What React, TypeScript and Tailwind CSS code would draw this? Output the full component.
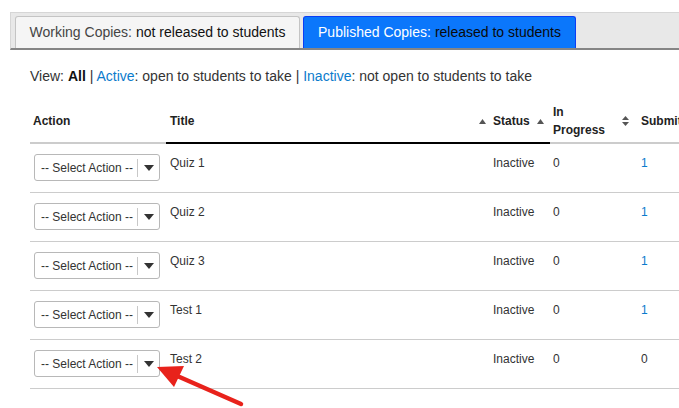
import React from "react";

const rows = [
  { title: "Quiz 1", status: "Inactive", prog: "0", sub: "1", link: true },
  { title: "Quiz 2", status: "Inactive", prog: "0", sub: "1", link: true },
  { title: "Quiz 3", status: "Inactive", prog: "0", sub: "1", link: true },
  { title: "Test 1", status: "Inactive", prog: "0", sub: "1", link: true },
  { title: "Test 2", status: "Inactive", prog: "0", sub: "0", link: false },
];

function SelectBox() {
  return (
    <div className="flex h-[27px] w-[126px] items-center rounded-[3px] border border-[#b8b8b8] bg-white">
      <span className="pl-[6px] text-[12px] text-[#333] whitespace-nowrap">-- Select Action --</span>
      <span className="ml-[4px] h-[18px] w-px bg-[#c8c8c8]" />
      <svg width="10" height="6" viewBox="0 0 10 6" className="ml-[6px]">
        <path d="M0 0 L10 0 L5 6 Z" fill="#333" />
      </svg>
    </div>
  );
}

const Up = () => (
  <svg width="7" height="5" viewBox="0 0 7 5"><path d="M0 5 L7 5 L3.5 0 Z" fill="#555" /></svg>
);
const Both = () => (
  <svg width="7" height="10" viewBox="0 0 7 10">
    <path d="M0 4 L7 4 L3.5 0 Z" fill="#555" />
    <path d="M0 6 L7 6 L3.5 10 Z" fill="#555" />
  </svg>
);

export default function App() {
  return (
    <div className="relative h-[408px] w-[679px] overflow-hidden bg-white font-['Liberation_Sans',Arial,sans-serif]">
      <div className="pt-[12px] pl-[10px]">
        <div className="flex h-[38px] items-end gap-[3px] border-t border-l border-[#d6d6d6] border-b-2 border-b-[#858585] bg-[#e8e8e8] pl-[4px]">
          <div className="flex h-[32px] w-[285px] items-center justify-center rounded-t-[3px] border border-b-0 border-[#c4c4c4] bg-[#f5f5f5] text-[14px]">
            <span className="text-[#444]">Working Copies:</span>
            <span className="ml-[4px] text-[#111]">not released to students</span>
          </div>
          <div className="flex h-[32px] w-[273px] items-center justify-center rounded-t-[3px] border border-b-0 border-[#0b3df5] bg-[#0b77fb] text-[14px]">
            <span className="text-white">Published Copies:</span>
            <span className="ml-[4px] text-[#0a0a0a]">released to students</span>
          </div>
        </div>
      </div>

      <div className="mt-[16px] pl-[30px] text-[14px] text-[#333]">
        View: <b className="text-[#111]">All</b> | <span className="text-[#0a7bcc]">Active</span>: open to students to take |{" "}
        <span className="text-[#0a7bcc]">Inactive</span>: not open to students to take
      </div>

      <table className="mt-[13px] ml-[30px] w-[760px] table-fixed border-collapse text-[12px]">
        <colgroup>
          <col className="w-[136px]" />
          <col className="w-[323px]" />
          <col className="w-[61px]" />
          <col className="w-[86px]" />
          <col className="w-[154px]" />
        </colgroup>
        <thead>
          <tr className="h-[43px] text-left font-bold text-[#222]">
            <th className="border-b-2 border-[#cccccc] pl-[3px] align-middle">Action</th>
            <th className="border-b-2 border-black pl-[4px] pr-[3px] align-middle">
              <div className="flex items-center justify-between">
                <span>Title</span>
                <Up />
              </div>
            </th>
            <th className="border-b-2 border-black pl-[4px] pr-[6px] align-middle">
              <div className="flex items-center justify-between">
                <span>Status</span>
                <Up />
              </div>
            </th>
            <th className="border-b-2 border-[#cccccc] pl-[3px] pr-[7px] align-middle">
              <div className="flex items-center justify-between leading-[18px]">
                <span>
                  In
                  <br />
                  Progress
                </span>
                <Both />
              </div>
            </th>
            <th className="border-b-2 border-[#cccccc] pl-[5px] align-middle whitespace-nowrap">Submitted</th>
          </tr>
        </thead>
        <tbody className="text-[#333]">
          {rows.map((r) => (
            <tr key={r.title} className="h-[49px] border-b border-[#cccccc]">
              <td className="pl-[4px] align-middle">
                <SelectBox />
              </td>
              <td className="pl-[4px] pt-[10px] align-top">{r.title}</td>
              <td className="pl-[4px] pt-[10px] align-top">{r.status}</td>
              <td className="pl-[3px] pt-[10px] align-top">{r.prog}</td>
              <td className="pl-[5px] pt-[10px] align-top">
                <span className={r.link ? "text-[#0a7bcc]" : ""}>{r.sub}</span>
              </td>
            </tr>
          ))}
        </tbody>
      </table>

      <svg className="absolute left-0 top-0" width="679" height="408" viewBox="0 0 679 408">
        <line x1="241" y1="404" x2="175" y2="375" stroke="#e8221b" strokeWidth="4.5" strokeLinecap="round" />
        <path d="M157 367 L184 366 L174 387 Z" fill="#e8221b" />
      </svg>
    </div>
  );
}
